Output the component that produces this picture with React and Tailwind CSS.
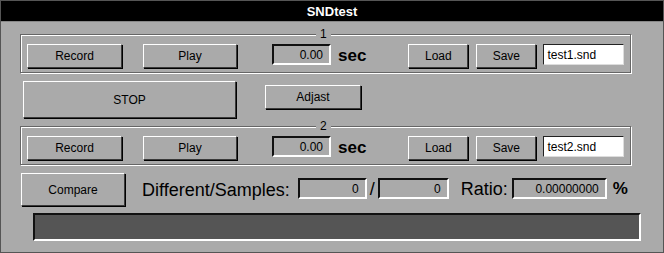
import React from "react";

const raised =
  "flex items-center justify-center border border-t-white border-l-white border-b-[#3a3a3a] border-r-[#3a3a3a] shadow-[1px_1px_0_#000] text-[12px] text-black leading-none";
const sunken =
  "flex items-center justify-end pr-[6px] border-2 border-t-[#111] border-l-[#111] border-b-white border-r-white text-[12px] text-black leading-none";
const groove =
  "relative border border-[#666] shadow-[inset_1px_1px_0_#fff,1px_1px_0_#fff]";

function SoundGroup({ n, file }) {
  return (
    <div className={`${groove} ml-[19px] w-[611px] h-[39px] flex items-start pt-[9px] pl-[6px]`}>
      <div className="absolute -top-[8px] left-[295px] px-[4px] bg-[#aaaaaa] text-[12px] leading-[14px] text-black">
        {n}
      </div>
      <div className={`${raised} w-[95px] h-[24px]`}>Record</div>
      <div className={`${raised} w-[94px] h-[24px] ml-[21px]`}>Play</div>
      <div className={`${sunken} w-[59px] h-[21px] ml-[35px]`}>0.00</div>
      <div className="ml-[7px] h-[22px] flex items-center text-[17px] font-bold text-black leading-none">sec</div>
      <div className={`${raised} w-[60px] h-[24px] ml-[42px]`}>Load</div>
      <div className={`${raised} w-[60px] h-[24px] ml-[8px]`}>Save</div>
      <div className="ml-[7px] w-[81px] h-[21px] flex items-center pl-[3px] bg-white border border-t-[#222] border-l-[#222] border-b-[#ddd] border-r-[#ddd] text-[12px] text-black leading-none">
        {file}
      </div>
    </div>
  );
}

export default function App() {
  return (
    <div
      className="w-[664px] h-[253px] bg-[#aaaaaa] border border-[#555] flex flex-col overflow-hidden"
      style={{ fontFamily: '"Liberation Sans", Arial, sans-serif' }}
    >
      <div className="h-[21px] bg-black border-b border-[#888] flex items-center justify-center text-white font-bold text-[13px] leading-none">
        SNDtest
      </div>
      <div className="mt-[12px]">
        <SoundGroup n="1" file="test1.snd" />
      </div>
      <div className="mt-[8px] flex items-start">
        <div className={`${raised} ml-[22px] w-[213px] h-[37px]`}>STOP</div>
        <div className={`${raised} ml-[29px] mt-[4px] w-[96px] h-[24px]`}>Adjast</div>
      </div>
      <div className="mt-[8px]">
        <SoundGroup n="2" file="test2.snd" />
      </div>
      <div className="mt-[8px] flex items-start">
        <div className={`${raised} ml-[20px] w-[104px] h-[33px]`}>Compare</div>
        <div className="ml-[17px] h-[33px] flex items-center text-[18px] text-black leading-none">
          Different/Samples:
        </div>
        <div className={`${sunken} ml-[8px] mt-[5px] w-[69px] h-[21px]`}>0</div>
        <div className="ml-[3px] h-[31px] flex items-center text-[18px] text-black leading-none">/</div>
        <div className={`${sunken} ml-[3px] mt-[5px] w-[71px] h-[21px]`}>0</div>
        <div className="ml-[12px] h-[31px] flex items-center text-[18px] text-black leading-none">Ratio:</div>
        <div className={`${sunken} ml-[4px] mt-[5px] w-[95px] h-[21px]`}>0.00000000</div>
        <div className="ml-[6px] h-[31px] flex items-center text-[17px] font-bold text-black leading-none">%</div>
      </div>
      <div className="mt-[7px] ml-[32px] w-[608px] h-[28px] bg-[#555555] border-2 border-t-[#111] border-l-[#111] border-b-white border-r-white" />
    </div>
  );
}
